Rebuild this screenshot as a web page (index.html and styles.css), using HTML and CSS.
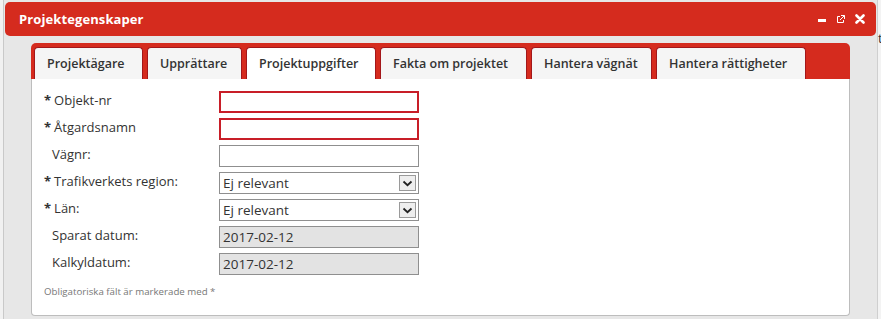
FILE: index.html
```html
<!DOCTYPE html>
<html lang="sv">
<head>
<meta charset="utf-8">
<title>Projektegenskaper</title>
<link rel="stylesheet" href="styles.css">
</head>
<body>
<div class="page">
  <div class="side side-left"></div>
  <div class="window">
    <div class="titlebar">
      <span class="title">Projektegenskaper</span>
      <div class="controls">
        <span class="ctl-min"></span>
        <svg class="ctl-pop" width="9" height="9" viewBox="0 0 9 9"><path d="M4 1.5H1.5v6h6V5" fill="none" stroke="#fff" stroke-width="1"/><path d="M5 0.5h3.5V4M8.5 0.5L4 5" fill="none" stroke="#fff" stroke-width="1"/></svg>
        <svg class="ctl-close" width="10" height="10" viewBox="0 0 10 10"><path d="M1.5 1.5L8.5 8.5M8.5 1.5L1.5 8.5" stroke="#fff" stroke-width="2.6" stroke-linecap="round"/></svg>
      </div>
    </div>
    <div class="body">
      <div class="panel">
        <div class="tabs">
          <div class="tab">Projektägare</div>
          <div class="tab">Upprättare</div>
          <div class="tab active">Projektuppgifter</div>
          <div class="tab">Fakta om projektet</div>
          <div class="tab">Hantera vägnät</div>
          <div class="tab">Hantera rättigheter</div>
        </div>
        <div class="content">
          <div class="form">
            <label class="lbl"><span class="req">*</span>Objekt-nr</label>
            <div class="field invalid"></div>
            <label class="lbl"><span class="req">*</span>Åtgardsnamn</label>
            <div class="field invalid"></div>
            <label class="lbl plain">Vägnr:</label>
            <div class="field"></div>
            <label class="lbl"><span class="req">*</span>Trafikverkets region:</label>
            <div class="field select"><span>Ej relevant</span><span class="arrow"><svg width="11" height="7" viewBox="0 0 11 7"><path d="M1.5 1.5L5.5 5.2L9.5 1.5" fill="none" stroke="#222" stroke-width="1.8"/></svg></span></div>
            <label class="lbl"><span class="req">*</span>Län:</label>
            <div class="field select"><span>Ej relevant</span><span class="arrow"><svg width="11" height="7" viewBox="0 0 11 7"><path d="M1.5 1.5L5.5 5.2L9.5 1.5" fill="none" stroke="#222" stroke-width="1.8"/></svg></span></div>
            <label class="lbl plain">Sparat datum:</label>
            <div class="field disabled">2017-02-12</div>
            <label class="lbl plain">Kalkyldatum:</label>
            <div class="field disabled">2017-02-12</div>
          </div>
          <p class="note">Obligatoriska fält är markerade med *</p>
        </div>
      </div>
    </div>
  </div>
  <div class="side side-right"><span class="peek">t</span></div>
</div>
</body>
</html>
```

FILE: styles.css
```css
html, body {
  margin: 0;
  padding: 0;
  background: #e7e7e7;
  font-family: "Open Sans", "DejaVu Sans", sans-serif;
}

.page {
  display: flex;
  width: 881px;
  height: 319px;
  overflow: hidden;
}

.side {
  flex: none;
}

.side-left {
  width: 3px;
  background: #f1f1f1;
  border-right: 1px solid #c9c9c9;
}

.side-right {
  width: 3px;
  background: #f3f3f3;
  border-left: 1px solid #cfcfcf;
  position: relative;
  overflow: hidden;
}

.peek {
  position: absolute;
  left: 0;
  top: 30px;
  font-size: 13px;
  line-height: 16px;
  color: #333;
}

.window {
  flex: 1;
  padding-top: 2px;
}

.titlebar {
  height: 34px;
  margin-left: 1px;
  margin-right: 1px;
  background: #d52b1e;
  border-radius: 5px;
  display: flex;
  align-items: center;
  justify-content: space-between;
  padding: 0 11px 0 14px;
}

.title {
  color: #fff;
  font-weight: 700;
  font-size: 13px;
  letter-spacing: 0.1px;
}

.controls {
  display: flex;
  align-items: center;
  gap: 10px;
}

.ctl-min {
  display: block;
  width: 8px;
  height: 3px;
  background: #fff;
  margin-top: 3px;
}

.body {
  padding: 7px 27px 0 27px;
}

.panel {
  display: flex;
  flex-direction: column;
}

.tabs {
  background: #d52b1e;
  border-radius: 5px 5px 0 0;
  height: 36px;
  box-sizing: border-box;
  padding: 4px 3px 0 3px;
  display: flex;
  align-items: flex-end;
  gap: 4px;
}

.tab {
  height: 32px;
  box-sizing: border-box;
  background: #f5f5f5;
  border: 1px solid #a3171a;
  border-bottom: none;
  border-radius: 4px 4px 0 0;
  padding: 0 12px;
  display: flex;
  align-items: center;
  font-size: 12.5px;
  font-weight: 600;
  color: #333;
  white-space: nowrap;
}

.tab:nth-child(1) { width: 109px; }
.tab:nth-child(2) { width: 95px; }
.tab:nth-child(3) { width: 130px; }
.tab:nth-child(4) { width: 147px; }
.tab:nth-child(5) { width: 121px; }
.tab:nth-child(6) { width: 150px; }

.tab.active {
  background: #fff;
}

.content {
  background: #fff;
  border: 1px solid #bdbdbd;
  border-top: none;
  border-radius: 0 0 4px 4px;
  height: 237px;
  box-sizing: border-box;
  padding: 12px 12px 0 12px;
}

.form {
  display: grid;
  grid-template-columns: 175px 200px;
  row-gap: 5px;
  align-items: center;
}

.lbl {
  font-size: 13px;
  color: #333;
  display: flex;
  align-items: center;
  height: 22px;
  margin-top: -4px;
}

.lbl.plain {
  padding-left: 8px;
}

.req {
  font-weight: 700;
  margin-right: 3px;
}

.field {
  height: 22px;
  box-sizing: border-box;
  border: 1px solid #8f8f8f;
  background: #fff;
  font-size: 13.5px;
  color: #333;
  display: flex;
  align-items: center;
  padding: 0 3px;
}

.field.invalid {
  border: 2px solid #c81e28;
}

.field.disabled {
  background: #e3e3e3;
  color: #333;
}

.field.select {
  justify-content: space-between;
  padding: 0 2px 0 3px;
}

.arrow {
  width: 17px;
  height: 16px;
  box-sizing: border-box;
  border: 1px solid #9a9a9a;
  background: #eeeeee;
  display: flex;
  align-items: center;
  justify-content: center;
}

.note {
  margin: 10px 0 0 0;
  font-size: 9.7px;
  color: #777;
}
```
